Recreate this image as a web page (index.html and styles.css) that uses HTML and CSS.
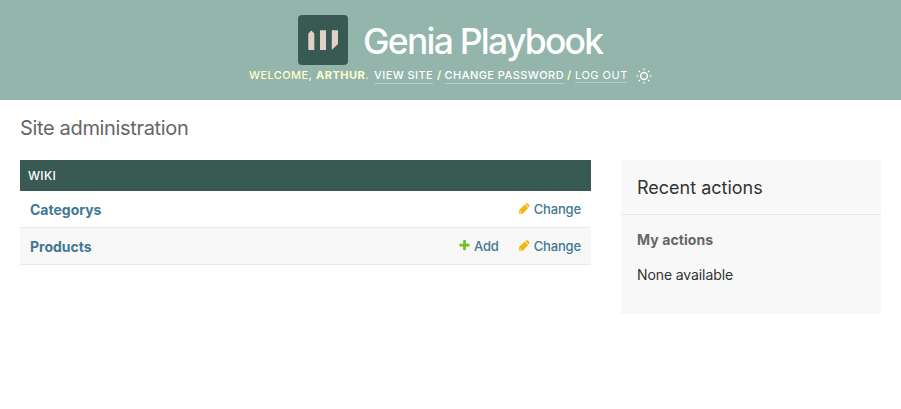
FILE: index.html
```
<!DOCTYPE html>
<html lang="en">
<head>
<meta charset="utf-8">
<title>Site administration</title>
<link rel="stylesheet" href="styles.css">
</head>
<body>
<svg class="defs" width="0" height="0">
  <symbol id="pencil" viewBox="0 0 12 12"><path fill-rule="evenodd" d="M.2 11.8V7.8L6.6 1.6L10.4 5.4L4.2 11.8ZM7.2 1L8 .4Q9.1-.3 10 .5L11.5 2Q12.3 3 11.6 4L11 4.8ZM1.2 9.7V10.8H2.3L2.7 10.4L1.6 9.3Z"/></symbol>
  <symbol id="plus" viewBox="0 0 1792 1792"><path d="M1600 736v192q0 40-28 68t-68 28h-416v416q0 40-28 68t-68 28h-192q-40 0-68-28t-28-68v-416h-416q-40 0-68-28t-28-68v-192q0-40 28-68t68-28h416v-416q0-40 28-68t68-28h192q40 0 68 28t28 68v416h416q40 0 68 28t28 68z"/></symbol>
</svg>
<header class="header">
  <div class="branding">
    <svg class="logo" viewBox="0 0 50 50">
      <rect width="50" height="50" rx="4" fill="#385a53"/>
      <path fill="#dfd1c5" d="M10.3 35V18.6L13.3 15.4L16.3 18.6V35ZM22 15.3H28V35H22ZM33.8 15.3H40V29L33.8 35Z"/>
    </svg>
    <h1 class="site-name">Genia Playbook</h1>
  </div>
  <div class="user-tools">
    <span class="welcome">WELCOME,</span>
    <strong class="user">ARTHUR<span class="dot">.</span></strong>
    <a class="view">VIEW SITE</a>
    <span class="slash">/</span>
    <a class="password">CHANGE PASSWORD</a>
    <span class="slash last">/</span>
    <a class="logout">LOG OUT</a>
    <svg class="sun" viewBox="0 0 16 16" fill="none" stroke="#fff" stroke-width="1.5" stroke-linecap="round">
      <circle cx="8" cy="8" r="3.4"/>
      <path d="M8 1.2v.3M8 14.5v.3M1.2 8h.3M14.5 8h.3M3.2 3.2l.2.2M12.6 12.6l.2.2M3.2 12.8l.2-.2M12.6 3.4l.2-.2"/>
    </svg>
  </div>
</header>
<main class="content">
  <h2 class="page-title">Site administration</h2>
  <div class="columns">
    <section class="module">
      <h3 class="caption">WIKI</h3>
      <div class="row">
        <a class="model">Categorys</a>
        <a class="link change"><svg class="icon pencil"><use href="#pencil"/></svg>Change</a>
      </div>
      <div class="row alt">
        <a class="model">Products</a>
        <a class="link add"><svg class="icon plus"><use href="#plus"/></svg>Add</a>
        <a class="link change"><svg class="icon pencil"><use href="#pencil"/></svg>Change</a>
      </div>
    </section>
    <aside class="recent">
      <h2 class="recent-title">Recent actions</h2>
      <h3 class="mine">My actions</h3>
      <p class="none">None available</p>
    </aside>
  </div>
</main>
</body>
</html>
```
FILE: styles.css
```
* { box-sizing: border-box; }
body { margin: 0; background: #fff; color: #333; font: 14px/20px Inter, sans-serif; }
h1, h2, h3, p { margin: 0; font-weight: 400; }
.defs { display: none; }
.header { height: 100px; padding-top: 15px; background: #93b5ab; }
.branding { display: flex; height: 50px; padding-left: 298px; }
.logo { width: 50px; height: 50px; margin-right: 15px; }
.site-name { color: #fff; font-size: 35.5px; font-weight: 450; line-height: 54px; letter-spacing: -1.75px; white-space: nowrap; }
.user-tools { display: flex; padding: 3px 0 0 249px; color: #ffc; font-size: 11px; line-height: 15px; letter-spacing: .5px; white-space: nowrap; }
.user-tools a { height: 16px; color: #fff; border-bottom: 1px solid #b3ccc5; }
.welcome { width: 67px; font-weight: 500; letter-spacing: .4px; }
.user { width: 58px; font-weight: 700; }
.dot { font-weight: 400; }
.view { width: 59px; margin-right: 4px; font-weight: 500; letter-spacing: .42px; }
.slash { width: 7.5px; font-weight: 600; }
.last { width: 8px; }
.password { width: 119.5px; margin-right: 3px; font-weight: 500; letter-spacing: .45px; }
.user-tools .logout { width: 52px; height: 15px; margin-right: 9px; }
.sun { width: 16px; height: 16px; }
.content { padding: 16px 20px; }
.page-title { height: 44px; color: #666; font-size: 20px; line-height: 24px; letter-spacing: -.34px; }
.columns { display: flex; gap: 30px; align-items: flex-start; }
.module { flex: 1; }
.caption { height: 31px; padding-left: 8px; background: #385a53; color: #fff; font-size: 12px; font-weight: 500; line-height: 31px; letter-spacing: .3px; }
.row { display: flex; height: 37px; padding: 0 10px; border-bottom: 1px solid #e8e8e8; line-height: 37px; color: #417893; }
.alt { background: #f8f8f8; }
.model { flex: 1; font-weight: 700; }
.link { display: flex; align-items: center; font-size: 13px; font-weight: 500; letter-spacing: -.15px; }
.change { width: 63px; }
.add { width: 60px; }
.icon { width: 13px; height: 13px; margin: 0 3px 2px 0; }
.pencil { width: 11px; height: 11px; margin: 0 4px 1px 1px; fill: #efb80b; }
.plus { fill: #70bf2b; }
.recent { width: 260px; height: 154px; background: #f8f8f8; }
.recent-title { height: 55px; padding: 16px; border-bottom: 1px solid #e8e8e8; font-size: 18px; line-height: 23px; }
.mine { padding: 15px 16px 0; color: #666; font-size: 14px; font-weight: 700; letter-spacing: .08px; }
.none { padding: 15px 16px 0; letter-spacing: -.1px; }
```
